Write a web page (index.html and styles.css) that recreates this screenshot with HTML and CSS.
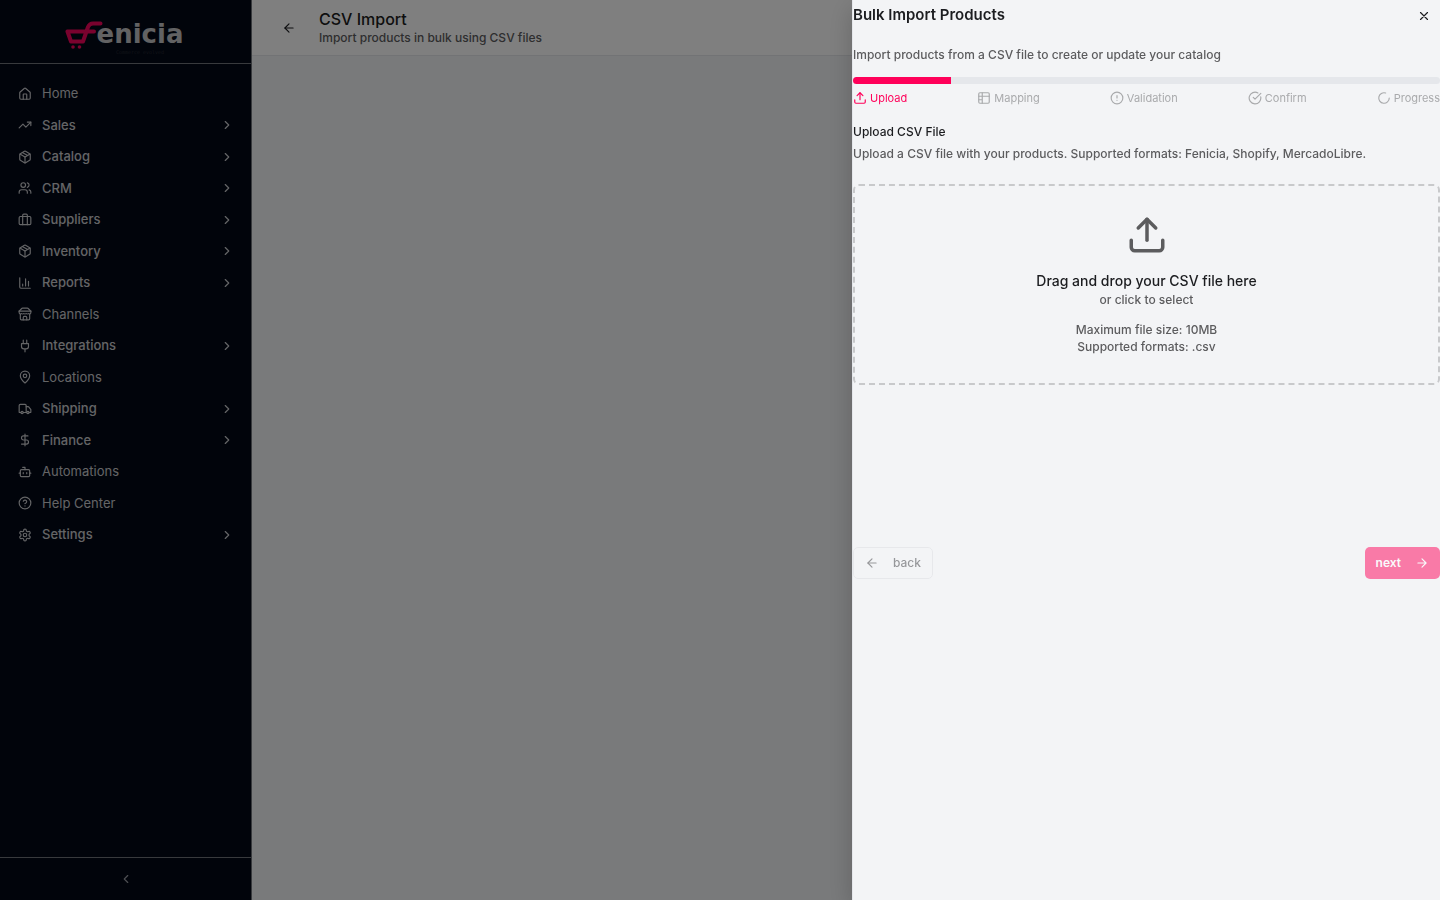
FILE: index.html
```html
<!DOCTYPE html>
<html lang="en">
<head>
<meta charset="utf-8">
<meta name="viewport" content="width=device-width, initial-scale=1">
<title>CSV Import - Fenicia</title>
<link rel="stylesheet" href="styles.css">
</head>
<body>
<svg class="defs" aria-hidden="true">
  <symbol id="chevron" viewBox="0 0 24 24"><path d="m9 18 6-6-6-6"/></symbol>
  <symbol id="box" viewBox="0 0 24 24"><path d="m7.5 4.27 9 5.15"/><path d="M21 8a2 2 0 0 0-1-1.73l-7-4a2 2 0 0 0-2 0l-7 4A2 2 0 0 0 3 8v8a2 2 0 0 0 1 1.73l7 4a2 2 0 0 0 2 0l7-4A2 2 0 0 0 21 16Z"/><path d="m3.3 7 8.7 5 8.7-5"/><path d="M12 22V12"/></symbol>
  <symbol id="arrow-left" viewBox="0 0 24 24"><path d="m12 19-7-7 7-7"/><path d="M19 12H5"/></symbol>
  <symbol id="upload" viewBox="0 0 24 24"><path d="M21 15v4a2 2 0 0 1-2 2H5a2 2 0 0 1-2-2v-4"/><path d="m17 8-5-5-5 5"/><path d="M12 3v12"/></symbol>
</svg>
<div class="app">
  <aside class="sidebar">
    <a class="brand" href="#" aria-label="Fenicia">
      <svg class="cart" viewBox="0 0 38 30" aria-hidden="true"><path class="cart-line" d="M2.500 11.500H29M2.500 11.500L6 21.500H18L23 7Q24.500 3.500 28 3.500H35.500"/><circle cx="8" cy="27" r="1.800"/><circle cx="14.500" cy="27" r="1.800"/></svg>
      <span class="brand-text"><span class="brand-name">enicia</span><span class="brand-tag">Commerce evolved</span></span>
    </a>
    <nav class="nav" aria-label="Main">
      <a class="item" href="#"><svg class="icon" viewBox="0 0 24 24"><path d="M15 21v-8a1 1 0 0 0-1-1h-4a1 1 0 0 0-1 1v8"/><path d="M3 10a2 2 0 0 1 .7-1.5l7-6a2 2 0 0 1 2.6 0l7 6A2 2 0 0 1 21 10v9a2 2 0 0 1-2 2H5a2 2 0 0 1-2-2z"/></svg>Home</a>
      <button class="item group"><svg class="icon" viewBox="0 0 24 24"><path d="m22 7-8.5 8.500-5-5L2 17"/><path d="M16 7h6v6"/></svg>Sales<svg class="icon more"><use href="#chevron"/></svg></button>
      <button class="item group"><svg class="icon"><use href="#box"/></svg>Catalog<svg class="icon more"><use href="#chevron"/></svg></button>
      <button class="item group"><svg class="icon" viewBox="0 0 24 24"><path d="M16 21v-2a4 4 0 0 0-4-4H6a4 4 0 0 0-4 4v2"/><circle cx="9" cy="7" r="4"/><path d="M22 21v-2a4 4 0 0 0-3-3.870M16 3.130a4 4 0 0 1 0 7.750"/></svg>CRM<svg class="icon more"><use href="#chevron"/></svg></button>
      <button class="item group"><svg class="icon" viewBox="0 0 24 24"><path d="M16 20V4a2 2 0 0 0-2-2h-4a2 2 0 0 0-2 2v16"/><rect x="2" y="6" width="20" height="14" rx="2"/></svg>Suppliers<svg class="icon more"><use href="#chevron"/></svg></button>
      <button class="item group"><svg class="icon"><use href="#box"/></svg>Inventory<svg class="icon more"><use href="#chevron"/></svg></button>
      <button class="item group"><svg class="icon" viewBox="0 0 24 24"><path d="M3 3v16a2 2 0 0 0 2 2h16"/><path d="M18 17V9M13 17V5M8 17v-3"/></svg>Reports<svg class="icon more"><use href="#chevron"/></svg></button>
      <a class="item" href="#"><svg class="icon" viewBox="0 0 24 24"><path d="m2 7 4.400-4.400A2 2 0 0 1 7.800 2h8.300a2 2 0 0 1 1.400.6L22 7"/><path d="M4 12v8a2 2 0 0 0 2 2h12a2 2 0 0 0 2-2v-8"/><path d="M15 22v-4a2 2 0 0 0-2-2h-2a2 2 0 0 0-2 2v4M2 7h20"/><path d="M22 7v3a2 2 0 0 1-2 2 2.700 2.700 0 0 1-1.600-.6.7.7 0 0 0-.8 0 2.700 2.700 0 0 1-3.200 0 .7.7 0 0 0-.8 0 2.700 2.700 0 0 1-3.200 0 .7.7 0 0 0-.8 0 2.700 2.700 0 0 1-3.200 0 .7.7 0 0 0-.8 0A2.700 2.700 0 0 1 4 12a2 2 0 0 1-2-2V7"/></svg>Channels</a>
      <button class="item group"><svg class="icon" viewBox="0 0 24 24"><path d="M12 22v-5M9 8V2M15 8V2M18 8v5a4 4 0 0 1-4 4h-4a4 4 0 0 1-4-4V8Z"/></svg>Integrations<svg class="icon more"><use href="#chevron"/></svg></button>
      <a class="item" href="#"><svg class="icon" viewBox="0 0 24 24"><path d="M20 10c0 5-5.500 10.200-7.400 11.800a1 1 0 0 1-1.200 0C9.500 20.200 4 15 4 10a8 8 0 0 1 16 0"/><circle cx="12" cy="10" r="3"/></svg>Locations</a>
      <button class="item group"><svg class="icon" viewBox="0 0 24 24"><path d="M14 18V6a2 2 0 0 0-2-2H4a2 2 0 0 0-2 2v11a1 1 0 0 0 1 1h2M15 18H9"/><path d="M19 18h2a1 1 0 0 0 1-1v-3.650a1 1 0 0 0-.22-.62l-3.480-4.350A1 1 0 0 0 17.520 8H14"/><circle cx="17" cy="18" r="2"/><circle cx="7" cy="18" r="2"/></svg>Shipping<svg class="icon more"><use href="#chevron"/></svg></button>
      <button class="item group"><svg class="icon" viewBox="0 0 24 24"><path d="M12 2v20M17 5H9.500a3.500 3.500 0 0 0 0 7h5a3.500 3.500 0 0 1 0 7H6"/></svg>Finance<svg class="icon more"><use href="#chevron"/></svg></button>
      <a class="item" href="#"><svg class="icon" viewBox="0 0 24 24"><path d="M12 8V4H8"/><rect x="4" y="8" width="16" height="12" rx="2"/><path d="M2 14h2M20 14h2M15 13v2M9 13v2"/></svg>Automations</a>
      <a class="item" href="#"><svg class="icon" viewBox="0 0 24 24"><circle cx="12" cy="12" r="10"/><path d="M9.090 9a3 3 0 0 1 5.830 1c0 2-3 3-3 3M12 17h.01"/></svg>Help Center</a>
      <button class="item group"><svg class="icon" viewBox="0 0 24 24"><path d="M12.220 2h-.44a2 2 0 0 0-2 2v.18a2 2 0 0 1-1 1.730l-.43.25a2 2 0 0 1-2 0l-.15-.08a2 2 0 0 0-2.730.73l-.22.38a2 2 0 0 0 .73 2.730l.15.1a2 2 0 0 1 1 1.720v.51a2 2 0 0 1-1 1.740l-.15.09a2 2 0 0 0-.73 2.730l.22.38a2 2 0 0 0 2.730.73l.15-.08a2 2 0 0 1 2 0l.43.25a2 2 0 0 1 1 1.730V20a2 2 0 0 0 2 2h.44a2 2 0 0 0 2-2v-.18a2 2 0 0 1 1-1.730l.43-.25a2 2 0 0 1 2 0l.15.08a2 2 0 0 0 2.730-.73l.22-.39a2 2 0 0 0-.73-2.730l-.15-.08a2 2 0 0 1-1-1.740v-.5a2 2 0 0 1 1-1.740l.15-.09a2 2 0 0 0 .73-2.730l-.22-.38a2 2 0 0 0-2.730-.73l-.15.08a2 2 0 0 1-2 0l-.43-.25a2 2 0 0 1-1-1.730V4a2 2 0 0 0-2-2z"/><circle cx="12" cy="12" r="3"/></svg>Settings<svg class="icon more"><use href="#chevron"/></svg></button>
    </nav>
    <button class="collapse" aria-label="Collapse sidebar"><svg class="icon" viewBox="0 0 24 24"><path d="m15 18-6-6 6-6"/></svg></button>
  </aside>
  <main class="main">
    <header class="page-header">
      <button class="icon-button" aria-label="Go back"><svg class="icon"><use href="#arrow-left"/></svg></button>
      <div><h1 class="title">CSV Import</h1><p class="subtitle">Import products in bulk using CSV files</p></div>
    </header>
  </main>
</div>
<div class="overlay"></div>
<section class="drawer" role="dialog" aria-modal="true" aria-labelledby="drawer-title">
  <header class="drawer-header">
    <h2 class="drawer-title" id="drawer-title">Bulk Import Products</h2>
    <button class="close" aria-label="Close"><svg class="icon" viewBox="0 0 24 24"><path d="M18 6 6 18M6 6l12 12"/></svg></button>
  </header>
  <p class="intro">Import products from a CSV file to create or update your catalog</p>
  <div class="track" role="progressbar" aria-label="Import progress" aria-valuenow="17" aria-valuemin="0" aria-valuemax="100"><div class="fill"></div></div>
  <ol class="steps">
    <li class="step active"><svg class="icon"><use href="#upload"/></svg>Upload</li>
    <li class="step"><svg class="icon" viewBox="0 0 24 24"><rect x="3" y="3" width="18" height="18" rx="2"/><path d="M3 9h18M3 15h6M9 3v18"/></svg>Mapping</li>
    <li class="step"><svg class="icon" viewBox="0 0 24 24"><circle cx="12" cy="12" r="10"/><path d="M12 8v4M12 16h.01"/></svg>Validation</li>
    <li class="step"><svg class="icon" viewBox="0 0 24 24"><path d="M21.800 10A10 10 0 1 1 17 3.340"/><path d="m9 11 3 3L22 4"/></svg>Confirm</li>
    <li class="step"><svg class="icon" viewBox="0 0 24 24"><path d="M21 12a9 9 0 1 1-6.220-8.560"/></svg>Progress</li>
  </ol>
  <h3 class="section-title">Upload CSV File</h3>
  <p class="section-text">Upload a CSV file with your products. Supported formats: Fenicia, Shopify, MercadoLibre.</p>
  <button class="dropzone">
    <svg class="icon"><use href="#upload"/></svg>
    <span class="drop-title">Drag and drop your CSV file here</span>
    <span class="drop-hint">or click to select</span>
    <span class="drop-limits">Maximum file size: 10MB<br>Supported formats: .csv</span>
  </button>
  <footer class="actions">
    <button class="button back" disabled><svg class="icon"><use href="#arrow-left"/></svg>back</button>
    <button class="button next" disabled>next<svg class="icon" viewBox="0 0 24 24"><path d="M5 12h14M12 5l7 7-7 7"/></svg></button>
  </footer>
</section>
</body>
</html>
```
FILE: styles.css
```css
* { box-sizing: border-box; }
body, h1, h2, h3, p, ol { margin: 0; padding: 0; }
body {
  font-family: Inter, "Liberation Sans", sans-serif;
  font-size: 12px;
  line-height: 18px;
  color: #1c1d20;
  overflow: hidden;
}
button { font: inherit; color: inherit; background: none; border: 0; padding: 0; cursor: pointer; }
a { color: inherit; text-decoration: none; }
.defs { display: none; }
.icon {
  width: 14px;
  height: 14px;
  flex: none;
  fill: none;
  stroke: currentColor;
  stroke-width: 2;
  stroke-linecap: round;
  stroke-linejoin: round;
}

.app { display: flex; min-height: 100vh; background: #f3f4f6; }
.sidebar {
  width: 252px;
  flex: none;
  display: flex;
  flex-direction: column;
  background: #020817;
  border-right: 1px solid #70747b;
  color: #c9cacd;
}
.brand {
  display: flex;
  justify-content: center;
  align-items: flex-start;
  height: 64px;
  padding: 20px 3px 0 0;
  border-bottom: 1px solid #70747b;
}
.cart { width: 38px; height: 30px; fill: #f5055c; margin-right: -6px; }
.cart-line { fill: none; stroke: #f5055c; stroke-width: 4; stroke-linecap: round; stroke-linejoin: round; }
.brand-text { display: flex; flex-direction: column; }
.brand-name { font: bold 26px/28px "DejaVu Sans", sans-serif; color: #c4c4c6; }
.brand-tag { margin-top: 1px; font: 5px/6px "DejaVu Sans Mono", monospace; color: #24272f; text-align: center; }
.nav { flex: 1; padding: 14px 15px 14px 16px; }
.item {
  display: flex;
  align-items: center;
  gap: 10px;
  width: 100%;
  padding: 6px 2px;
  font-size: 13px;
  line-height: 1.5;
  text-align: left;
}
.group { font-weight: 500; }
.more { margin-left: auto; }
.collapse {
  display: flex;
  align-items: center;
  justify-content: center;
  height: 43px;
  border-top: 1px solid #70747b;
  color: #9a9da3;
}

.main { flex: 1; }
.page-header {
  display: flex;
  align-items: center;
  gap: 17px;
  height: 56px;
  padding: 0 24px;
  background: #fff;
  border-bottom: 1px solid #e5e7eb;
}
.icon-button { display: flex; align-items: center; justify-content: center; width: 26px; height: 28px; }
.title { font-size: 16px; line-height: 20px; font-weight: 500; color: #1c1d20; }
.subtitle, .intro, .section-text { font-weight: 500; color: #5c5c5e; }

.overlay { position: fixed; inset: 0; background: rgba(0, 0, 0, 0.5); }
.drawer {
  position: fixed;
  top: 0;
  right: 0;
  bottom: 0;
  width: 588px;
  background: #f3f4f6;
  border-left: 1px solid #e5e7eb;
  box-shadow: 0 8px 24px rgba(0, 0, 0, 0.2);
}
.drawer-header { display: flex; align-items: flex-start; justify-content: space-between; height: 46px; padding: 5px 9px 0 0; }
.drawer-title { font-size: 15px; line-height: 20px; font-weight: 600; }
.close { display: flex; align-items: center; justify-content: center; width: 14px; height: 22px; }
.track { height: 7px; margin-top: 13px; border-radius: 4px; background: #e5e7eb; overflow: hidden; }
.fill { width: 16.67%; height: 100%; background: #ff0059; }
.steps {
  display: flex;
  justify-content: space-between;
  margin-top: 6px;
  list-style: none;
  font-size: 11px;
  line-height: 16px;
  color: #a9aaac;
}
.step { display: flex; align-items: center; gap: 3px; }
.active { color: #ff0059; }
.section-title { margin-top: 17px; font-size: 12px; line-height: 18px; font-weight: 500; }
.section-text { margin-top: 4px; }
.dropzone {
  display: flex;
  flex-direction: column;
  align-items: center;
  width: 100%;
  margin-top: 21px;
  padding: 28px 24px;
  border: 2px dashed #c8c9cb;
  border-radius: 6px;
  font-weight: 500;
  line-height: 17px;
  color: #5c5c5e;
}
.dropzone .icon { width: 42px; height: 42px; }
.drop-title { margin-top: 15px; font-size: 14px; line-height: 20px; color: #1c1d20; }
.drop-hint { line-height: 18px; }
.drop-limits { margin-top: 12px; }
.actions { display: flex; justify-content: space-between; margin-top: 162px; }
.button { display: flex; align-items: center; gap: 14px; height: 32px; padding: 0 11px; border-radius: 5px; opacity: 0.5; }
.back { border: 1px solid #dcdde1; font-weight: 500; color: #3c3c40; }
.next { background: #ff0059; color: #fff; font-weight: 600; }
```
